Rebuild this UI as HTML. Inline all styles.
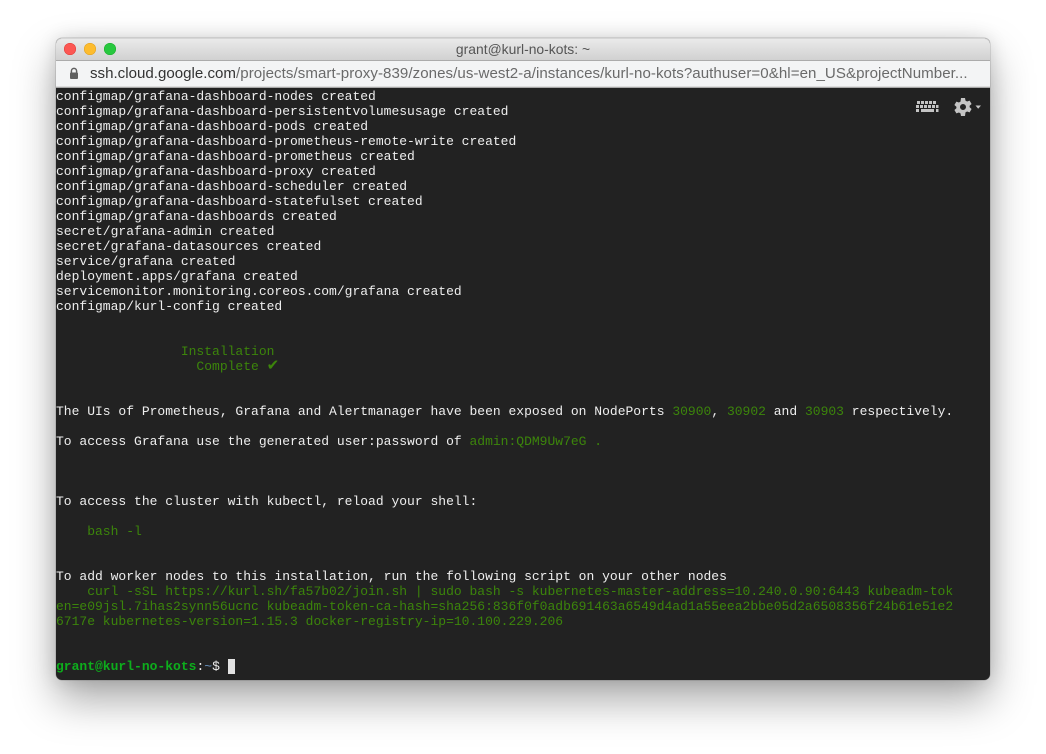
<!DOCTYPE html>
<html><head><meta charset="utf-8">
<style>
html,body{margin:0;padding:0;background:#fff;width:1046px;height:754px;overflow:hidden}
#win{position:absolute;left:56px;top:38px;width:934px;height:642px;border-radius:6px;background:#222;box-shadow:0 20px 42px rgba(0,0,0,.34),0 0 18px rgba(0,0,0,.13),0 0 0 .5px rgba(0,0,0,.2);overflow:hidden}
#bar{position:absolute;left:0;top:0;width:934px;height:22px;background:linear-gradient(#ebebeb,#d1d1d1);border-bottom:1px solid #ababab;border-radius:6px 6px 0 0;box-shadow:inset 0 1px 0 #d6d6d6}
.dot{position:absolute;top:5px;width:12px;height:12px;border-radius:50%}
#title{position:absolute;left:0;width:934px;top:3px;text-align:center;font:13.9px/16px "Liberation Sans",sans-serif;color:#555;filter:blur(.25px)}
#addr{position:absolute;left:0;top:23px;width:934px;height:25.5px;background:#f3f4f5;border-bottom:1.5px solid #a8a8a8;box-shadow:inset 0 -1px 0 #ddd;font:15.1px/25px "Liberation Sans",sans-serif;color:#6a6a6a;white-space:nowrap}
#addr span.u{position:absolute;left:34px;top:0;filter:blur(.25px);letter-spacing:.05px}
#addr b{font-weight:normal;color:#333;letter-spacing:0}
pre{position:absolute;left:0;top:51px;margin:0;font:13px/15px "Liberation Mono",monospace;color:#eee;white-space:pre;filter:blur(.3px)}
.g{color:#3c850b}
.p{color:#0dae1c;font-weight:bold}
.b{color:#6a93c0}
#cur{position:absolute;left:172px;top:621px;width:7px;height:15px;background:#e2e2e2}
svg{position:absolute}
</style></head><body>
<div id="win">
<div id="bar">
<div class="dot" style="left:8px;background:#fc5753;box-shadow:inset 0 0 0 .5px #df3d38"></div>
<div class="dot" style="left:28px;background:#fdbc2e;box-shadow:inset 0 0 0 .5px #de9f20"></div>
<div class="dot" style="left:48px;background:#28c83f;box-shadow:inset 0 0 0 .5px #1dab2c"></div>
<div id="title">grant@kurl-no-kots: ~</div>
</div>
<div id="addr">
<svg style="left:13px;top:6px" width="10" height="13" viewBox="0 0 10 13"><path d="M2.4 6V4a2.6 2.6 0 0 1 5.2 0v2" fill="none" stroke="#606060" stroke-width="1.5"/><rect x="1" y="5.5" width="8" height="6.5" rx="1" fill="#606060"/></svg>
<span class="u"><b>ssh.cloud.google.com</b>/projects/smart-proxy-839/zones/us-west2-a/instances/kurl-no-kots?authuser=0&amp;hl=en_US&amp;projectNumber...</span>
</div>
<pre>configmap/grafana-dashboard-nodes created
configmap/grafana-dashboard-persistentvolumesusage created
configmap/grafana-dashboard-pods created
configmap/grafana-dashboard-prometheus-remote-write created
configmap/grafana-dashboard-prometheus created
configmap/grafana-dashboard-proxy created
configmap/grafana-dashboard-scheduler created
configmap/grafana-dashboard-statefulset created
configmap/grafana-dashboards created
secret/grafana-admin created
secret/grafana-datasources created
service/grafana created
deployment.apps/grafana created
servicemonitor.monitoring.coreos.com/grafana created
configmap/kurl-config created


<span class="g">                Installation</span>
<span class="g">                  Complete <span style="font-family:'DejaVu Sans',sans-serif;font-size:15px;line-height:0">✔</span></span>


The UIs of Prometheus, Grafana and Alertmanager have been exposed on NodePorts <span class="g">30900</span>, <span class="g">30902</span> and <span class="g">30903</span> respectively.

To access Grafana use the generated user:password of <span class="g">admin:QDM9Uw7eG .</span>



To access the cluster with kubectl, reload your shell:

<span class="g">    bash -l</span>


To add worker nodes to this installation, run the following script on your other nodes
<span class="g">    curl -sSL https://kurl.sh/fa57b02/join.sh | sudo bash -s kubernetes-master-address=10.240.0.90:6443 kubeadm-tok
en=e09jsl.7ihas2synn56ucnc kubeadm-token-ca-hash=sha256:836f0f0adb691463a6549d4ad1a55eea2bbe05d2a6508356f24b61e51e2
6717e kubernetes-version=1.15.3 docker-registry-ip=10.100.229.206</span>


<span class="p">grant@kurl-no-kots</span>:<span class="b">~</span>$</pre>
<div id="cur"></div>
<svg style="left:860px;top:62px" width="23" height="15" viewBox="0 0 23 15" fill="#c4c4c4">
<rect x="1" y="1" width="3" height="3"/><rect x="5" y="1" width="3" height="3"/><rect x="9" y="1" width="3" height="3"/><rect x="13" y="1" width="3" height="3"/><rect x="17" y="1" width="3" height="3"/>
<rect x="0" y="5" width="3" height="3"/><rect x="4" y="5" width="3" height="3"/><rect x="8" y="5" width="3" height="3"/><rect x="12" y="5" width="3" height="3"/><rect x="16" y="5" width="3" height="3"/><rect x="20" y="5" width="2.5" height="3"/>
<rect x="0" y="9" width="3" height="3"/><rect x="5" y="9" width="13" height="3"/><rect x="20" y="9" width="2.5" height="3"/>
</svg>
<svg style="left:898px;top:59px" width="18" height="20" viewBox="0 0 18 20"><path fill="#c4c4c4" fill-rule="evenodd" d="M7 1h4l.5 2.6 1.6.9 2.5-.9 2 3.4-2 1.7v1.6l2 1.7-2 3.4-2.5-.9-1.6.9L11 19H7l-.5-2.6-1.6-.9-2.5.9-2-3.4 2-1.7V9.7l-2-1.7 2-3.4 2.5.9 1.6-.9zM9 7a3 3 0 1 0 0 6 3 3 0 0 0 0-6z"/></svg>
<svg style="left:919px;top:67px" width="7" height="5" viewBox="0 0 7 5"><path fill="#c4c4c4" d="M.5 .5h5.5L3.2 3.8z"/></svg>
</div>
</body></html>
